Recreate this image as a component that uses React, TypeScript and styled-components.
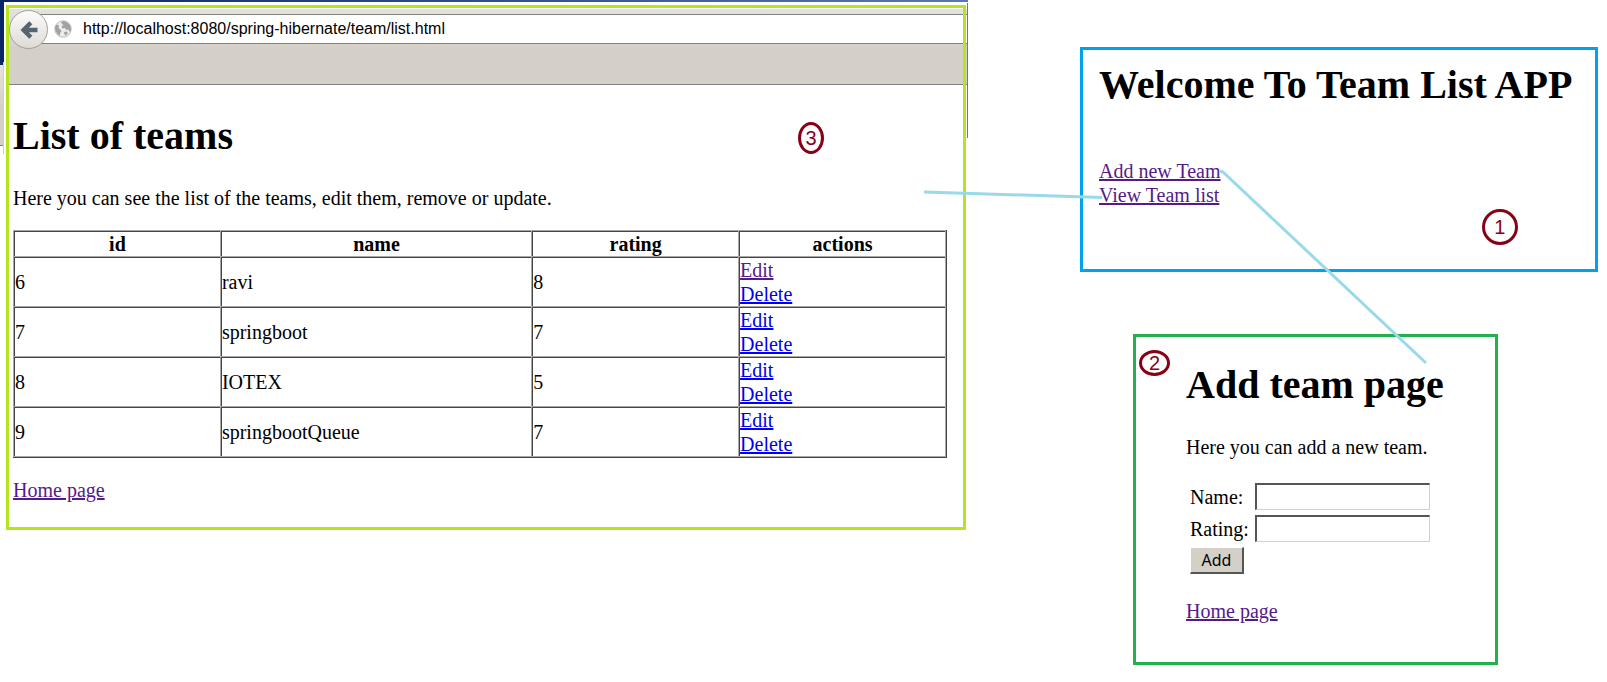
import React from "react";
import styled, { createGlobalStyle } from "styled-components";

const Global = createGlobalStyle`
  *, *::before, *::after { box-sizing: border-box; }
  body {
    margin: 0;
    background: #fff;
    color: #000;
    font: 20px/24px "Liberation Serif", "Times New Roman", serif;
  }
`;

const Canvas = styled.div`
  position: relative;
  display: flex;
  align-items: flex-start;
  min-height: 100vh;
  padding-right: 9px;
`;

const LeftArea = styled.div`
  flex: 968 1 0;
  min-width: 0;
  display: grid;
  grid-template-columns: 4px 2px minmax(0, 1fr) 1px 1px;
  grid-template-rows: 2px 3px auto;
`;

const TitleStrip = styled.div`
  grid-column: 2 / 6;
  grid-row: 1;
  background: linear-gradient(90deg, #0a246a, #5b77b0);
`;

const WindowEdge = styled.div`
  grid-column: 1;
  grid-row: 1 / 4;
  height: 154px;
  background:
    linear-gradient(transparent 62px, #d0cec9 62px) right / 1px 100% no-repeat,
    linear-gradient(#0a246a 65px, #e6e3de 65px, #d4d0c8 110px, #d4d0c8 145px, #808080 145px, #808080 146px, #fff 146px);
`;

const WindowSliver = styled.div`
  grid-column: 5;
  grid-row: 2 / 4;
  height: 135px;
  margin-top: 1px;
  background: #1c8fd8;
`;

const ToolbarEnd = styled.div`
  grid-column: 4;
  grid-row: 3;
  height: 80px;
  margin-top: 4px;
  background: linear-gradient(#e2dfda 5px, #808080 5px, #808080 6px, #fff 6px, #fff 34px, #808080 34px, #808080 35px, #d4d0c8 35px, #d4d0c8 75px, #808080 75px, #808080 76px, #fff 76px);
`;

const Panel = styled.section<{ $color: string }>`
  border: 3px solid ${(p) => p.$color};
`;

const BrowserPanel = styled(Panel)`
  position: relative;
  grid-column: 3;
  grid-row: 3;
  padding-bottom: 25px;
`;

const Toolbar = styled.div`
  display: flex;
  align-items: flex-start;
  height: 77px;
  padding-top: 2px;
  border-bottom: 1px solid #808080;
  background: linear-gradient(#fff 1px, #e4e2dd 1px, #d4d0c8 42px);
`;

const BackButton = styled.button`
  position: relative;
  flex: none;
  display: grid;
  place-items: center;
  width: 39px;
  height: 39px;
  padding: 0;
  border: 1px solid #a0a09e;
  border-radius: 50%;
  background: linear-gradient(#fcfcfb, #dedbd6);
`;

const AddressBar = styled.div`
  flex: 1;
  display: flex;
  align-items: center;
  gap: 7px;
  height: 30px;
  margin: 4px 0 0 -10px;
  padding-left: 16px;
  border: solid #808080;
  border-width: 1px 0;
  background: #fff;
`;

const AddressInput = styled.input`
  flex: 1;
  min-width: 0;
  height: 24px;
  padding: 0 4px;
  border: 0;
  background: none;
  color: #000;
  font: 16px/24px "Liberation Sans", Arial, sans-serif;
`;

const Content = styled.div`
  padding: 31px 16px 0 4px;
`;

const Title = styled.h1`
  margin: 0 0 30px;
  font-size: 40px;
  line-height: 40px;
  font-weight: bold;
`;

const Text = styled.p`
  margin: 0 0 20px;
`;

const TeamTable = styled.table`
  width: 100%;
  margin-bottom: 20px;
  padding: 0 1px 1px 0;
  border: solid #444;
  border-width: 0 1px 1px 0;
  border-spacing: 0;
  box-shadow: inset -1px -1px #a8a8a8;
  table-layout: fixed;
`;

const cellEdges = `
  padding: 1px 0 0 1px;
  border: solid #a8a8a8;
  border-width: 1px 0 0 1px;
  box-shadow: inset 1px 1px #444;
`;

const HeadCell = styled.th<{ $share: string }>`
  ${cellEdges}
  width: ${(p) => p.$share};
`;

const Cell = styled.td`
  ${cellEdges}
`;

const Link = styled.a<{ $visited?: boolean }>`
  color: ${(p) => (p.$visited ? "#551a8b" : "#0000ee")};
  text-decoration: underline;
`;

const RightArea = styled.div`
  flex: 518 1 0;
  min-width: 0;
  margin: 47px 0 0 112px;
`;

const WelcomePanel = styled(Panel)`
  position: relative;
  height: 225px;
  padding: 15px 16px 0;
`;

const WelcomeTitle = styled(Title)`
  margin-bottom: 54px;
  white-space: nowrap;
`;

const LinkList = styled.nav`
  display: flex;
  flex-direction: column;
  align-items: flex-start;
`;

const AddPanel = styled(Panel)`
  position: relative;
  margin: 62px 100px 0 53px;
  padding: 28px 0 39px 50px;
`;

const AddText = styled(Text)`
  margin-bottom: 24px;
`;

const FormTable = styled.form`
  display: grid;
  grid-template-columns: max-content 175px;
  gap: 5px 6px;
  align-items: center;
  justify-content: start;
  margin-bottom: 25px;
  padding-left: 4px;
`;

const Field = styled.input`
  width: 100%;
  height: 27px;
  padding: 0 4px;
  border: solid;
  border-width: 2px 1px 1px 2px;
  border-color: #555 #d4d0c8 #d4d0c8 #555;
  background: #fff;
  font: 16px "Liberation Sans", Arial, sans-serif;
`;

const AddButton = styled.button`
  justify-self: start;
  width: 54px;
  height: 27px;
  padding: 0;
  border: solid;
  border-width: 1px 2px 2px 1px;
  border-color: #fff #555 #555 #fff;
  background: #d4d0c8;
  color: #000;
  font: 16px/22px "Noto Sans", "Open Sans", sans-serif;
`;

const Badge = styled.span<{ $w: number; $h: number; $top: number; $left: string }>`
  position: absolute;
  top: ${(p) => p.$top}px;
  left: ${(p) => p.$left};
  display: grid;
  place-items: center;
  width: ${(p) => p.$w}px;
  height: ${(p) => p.$h}px;
  border: 3px solid #880015;
  border-radius: 50%;
  color: #880015;
  font: 20px/20px "Liberation Sans", Arial, sans-serif;
`;

const Connectors = styled.svg`
  position: absolute;
  top: 0;
  left: 0;
  width: 100%;
  height: 682px;
  pointer-events: none;
  fill: none;
  stroke: #99d9ea;
  stroke-width: 3;
`;

const teams = [
  { id: 6, name: "ravi", rating: 8, edited: true },
  { id: 7, name: "springboot", rating: 7, edited: false },
  { id: 8, name: "IOTEX", rating: 5, edited: false },
  { id: 9, name: "springbootQueue", rating: 7, edited: false },
];

const BackArrow = () => (
  <svg width="18" height="18" viewBox="0 0 18 18" aria-hidden="true">
    <path d="M10.800 1.800 3.600 9l7.200 7.200M4 9H17.500" fill="none" stroke="#56646f" strokeWidth="4.400" />
  </svg>
);

const Globe = () => (
  <svg width="18" height="18" viewBox="0 0 18 18" aria-hidden="true">
    <circle cx="9" cy="9" r="8.200" fill="#ececec" stroke="#bcbcbc" />
    <path d="M1 7 3 4.500 5 5.500 4.500 8 6.500 9.500 7.500 11.500 6 13 6 16 3.500 14 1.500 11ZM7 2 10 1 14 3 16.500 6 17 10 15.500 12 14.500 9.500 12.500 10 11 8 8.500 8.500 7.500 6.500 9.500 5 8 4ZM10 12 12.500 11.500 14 13 12 15.500 10.500 14.500Z" fill="#a2a2a2" />
  </svg>
);

export default function App() {
  return (
    <Canvas>
      <Global />
      <LeftArea>
        <TitleStrip />
        <WindowEdge />
        <ToolbarEnd />
        <WindowSliver />
        <BrowserPanel $color="#b5e61d">
          <Toolbar>
            <BackButton type="button" aria-label="Back"><BackArrow /></BackButton>
            <AddressBar>
              <Globe />
              <AddressInput aria-label="Address" defaultValue="http://localhost:8080/spring-hibernate/team/list.html" />
            </AddressBar>
          </Toolbar>
          <Content>
            <Title>List of teams</Title>
            <Text>Here you can see the list of the teams, edit them, remove or update.</Text>
            <TeamTable>
              <thead>
                <tr>
                  <HeadCell $share="22.2%">id</HeadCell>
                  <HeadCell $share="33.4%">name</HeadCell>
                  <HeadCell $share="22.2%">rating</HeadCell>
                  <HeadCell $share="22.2%">actions</HeadCell>
                </tr>
              </thead>
              <tbody>
                {teams.map((team) => (
                  <tr key={team.id}>
                    <Cell>{team.id}</Cell>
                    <Cell>{team.name}</Cell>
                    <Cell>{team.rating}</Cell>
                    <Cell>
                      <Link href="#edit" $visited={team.edited}>Edit</Link>
                      <br />
                      <Link href="#delete">Delete</Link>
                    </Cell>
                  </tr>
                ))}
              </tbody>
            </TeamTable>
            <Link href="#home" $visited>Home page</Link>
          </Content>
          <Badge $w={26} $h={32} $top={114} $left="82.7%">3</Badge>
        </BrowserPanel>
      </LeftArea>
      <RightArea>
        <WelcomePanel $color="#00a2e8">
          <WelcomeTitle>Welcome To Team List APP</WelcomeTitle>
          <LinkList>
            <Link href="#add" $visited>Add new Team</Link>
            <Link href="#list" $visited>View Team list</Link>
          </LinkList>
          <Badge $w={36} $h={36} $top={159} $left="77.9%">1</Badge>
        </WelcomePanel>
        <AddPanel $color="#22b14c">
          <Title>Add team page</Title>
          <AddText>Here you can add a new team.</AddText>
          <FormTable onSubmit={(e) => e.preventDefault()}>
            <label htmlFor="name">Name:</label>
            <Field id="name" />
            <label htmlFor="rating">Rating:</label>
            <Field id="rating" />
            <AddButton type="submit">Add</AddButton>
          </FormTable>
          <Link href="#home" $visited>Home page</Link>
          <Badge $w={31} $h={26} $top={13} $left="3px">2</Badge>
        </AddPanel>
      </RightArea>
      <Connectors viewBox="0 0 1607 682" preserveAspectRatio="none" aria-hidden="true">
        <path d="M924 192 1102 197.500M1220 171 1223 172 1426 363" />
      </Connectors>
    </Canvas>
  );
}
